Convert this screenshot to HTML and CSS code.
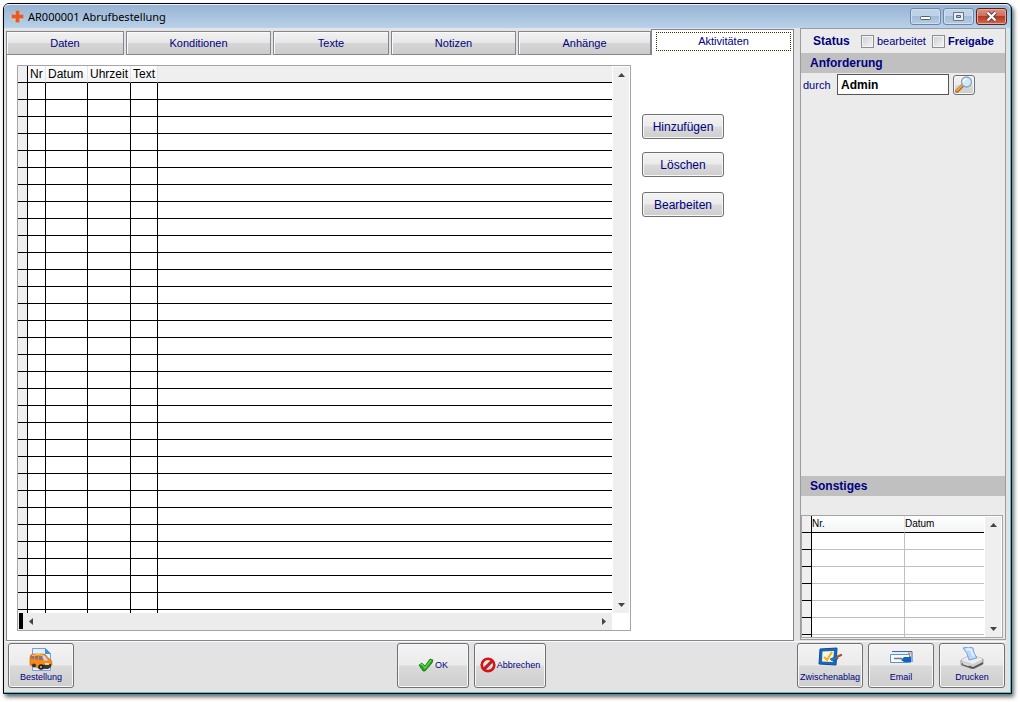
FILE: index.html
```
<!DOCTYPE html>
<html lang="de">
<head>
<meta charset="utf-8">
<title>AR000001 Abrufbestellung</title>
<link rel="stylesheet" href="styles.css">
</head>
<body>
<div class="window">
  <header class="titlebar">
    <svg class="app-icon" width="14" height="14" viewBox="0 0 14 14"><path d="M4 1h5v4h4v5H9v4H4v-4H0V5h4z" fill="#c9c9cc"/><path d="M5.500 .5h4V4.500h4v4h-4v4h-4v-4h-4v-4h4z" fill="#e85a24" stroke="#d9a793" stroke-width=".6"/></svg>
    <h1 class="title">AR000001 Abrufbestellung</h1>
    <div class="window-buttons">
      <button class="win-btn" aria-label="Minimieren"><svg width="13" height="11" viewBox="0 0 13 11"><rect x="1.500" y="5.500" width="10" height="3" rx="1" fill="#fff" stroke="#555f6c"/></svg></button>
      <button class="win-btn" aria-label="Maximieren"><svg width="13" height="11" viewBox="0 0 13 11"><path d="M1.500 1.500h10v8h-10z" fill="#e8eef5" stroke="#6b7683"/><path d="M4.500 4.500h4v2h-4z" fill="#b5c4d4" stroke="#555f6c"/></svg></button>
      <button class="win-btn win-close" aria-label="Schließen"><svg width="13" height="11" viewBox="0 0 13 11"><path d="M2.500 1.500l8 8m0-8l-8 8" stroke="#5b4048" stroke-width="4"/><path d="M2.500 1.500l8 8m0-8l-8 8" stroke="#fff" stroke-width="2.200"/></svg></button>
    </div>
  </header>
  <main class="main">
    <section class="left">
      <div class="tabs" role="tablist">
        <button class="tab" role="tab">Daten</button>
        <button class="tab" role="tab">Konditionen</button>
        <button class="tab" role="tab">Texte</button>
        <button class="tab" role="tab">Notizen</button>
        <button class="tab tab-joined" role="tab">Anhänge</button>
        <button class="tab tab-active" role="tab" aria-selected="true"><span class="focus">Aktivitäten</span></button>
      </div>
      <div class="page">
        <div class="grid">
          <div class="grid-view">
            <table class="list">
              <colgroup><col class="c-mark"><col class="c-nr"><col class="c-datum"><col class="c-zeit"><col class="c-text"><col></colgroup>
              <thead><tr><th></th><th>Nr</th><th>Datum</th><th>Uhrzeit</th><th>Text</th><th></th></tr></thead>
              <tbody data-rows="32" data-cols="6"></tbody>
            </table>
          </div>
          <div class="vbar"><svg width="7" height="4" viewBox="0 0 7 4"><path d="M0 4l3.500-4L7 4z" fill="#444"/></svg><svg width="7" height="4" viewBox="0 0 7 4"><path d="M0 0h7L3.500 4z" fill="#444"/></svg></div>
          <div class="hbar"><span class="split"></span><svg width="4" height="7" viewBox="0 0 4 7"><path d="M4 0v7L0 3.500z" fill="#444"/></svg><span class="track"></span><svg width="4" height="7" viewBox="0 0 4 7"><path d="M0 0v7l4-3.500z" fill="#444"/></svg></div>
        </div>
        <div class="actions">
          <button class="btn">Hinzufügen</button>
          <button class="btn">Löschen</button>
          <button class="btn btn-last">Bearbeiten</button>
        </div>
      </div>
    </section>
    <aside class="side">
      <div class="status">
        <strong class="status-title">Status</strong>
        <label class="check"><input type="checkbox">bearbeitet</label>
        <label class="check check-bold"><input type="checkbox">Freigabe</label>
      </div>
      <h2 class="band">Anforderung</h2>
      <div class="request">
        <label for="durch">durch</label>
        <input class="field" id="durch" type="text" value="Admin">
        <button class="search" aria-label="Suchen"><svg width="18" height="17" viewBox="0 0 18 17"><path d="M2 15l6-6" stroke="#a85b16" stroke-width="3.600" stroke-linecap="round"/><path d="M2 14.500l5.500-5.500" stroke="#f3a43a" stroke-width="2.200" stroke-linecap="round"/><circle cx="11.500" cy="6" r="5" fill="#cdeaf8" stroke="#8ba3bd" stroke-width="1.300"/><path d="M8.500 6a3 3 0 0 1 3-3" stroke="#fff" stroke-width="1.500" fill="none"/></svg></button>
      </div>
      <h2 class="band band-lower">Sonstiges</h2>
      <div class="misc">
        <div class="misc-view">
          <table class="list list-misc">
            <colgroup><col class="c-mark"><col class="c-num"><col></colgroup>
            <thead><tr><th></th><th>Nr.</th><th>Datum</th></tr></thead>
            <tbody data-rows="7" data-cols="3"></tbody>
          </table>
        </div>
        <div class="vbar"><svg width="7" height="4" viewBox="0 0 7 4"><path d="M0 4l3.500-4L7 4z" fill="#444"/></svg><svg width="7" height="4" viewBox="0 0 7 4"><path d="M0 0h7L3.500 4z" fill="#444"/></svg></div>
      </div>
    </aside>
  </main>
  <footer class="footer">
    <div class="foot-group foot-left">
      <button class="tool"><svg width="24" height="24" viewBox="0 0 24 24"><path d="M3.500 1.500h13l5 5v17h-18z" fill="#e4efff" stroke="#7f9be0"/><path d="M16 1l6 6h-6z" fill="#3f92dc"/><path d="M1 10q0-3 4-3h9q3 0 5 4l3 2q1 1 1 5l-3 3-8 1-11-4z" fill="#f58a16" stroke="#b85d0c" stroke-width=".6"/><path d="M2 9h3v3l-3-.5zM6 9h3v3.500H6zM10 9h3l1 4h-4z" fill="#8a7080"/><path d="M13.500 9h2.500l3 4.500h-4z" fill="#c8d7ff"/><path d="M3 8.500q6-2 12 0" stroke="#ffcb6b" fill="none"/><path d="M12 18l10-1v3l-3 2-8-.5z" fill="#383838"/><circle cx="5" cy="18.500" r="2" fill="#333"/><circle cx="12" cy="20" r="2.800" fill="#222"/><circle cx="12" cy="20" r="1.100" fill="#bbb"/><path d="M16 17h4" stroke="#fff6bb" stroke-width="1.500"/></svg>Bestellung</button>
    </div>
    <div class="foot-group foot-center">
      <button class="tool tool-row"><svg width="16" height="14" viewBox="0 0 16 14"><path d="M1 7l3-2 3 3 5-7 3 1-1 3-7 8H5z" fill="#22a51c" stroke="#147810" stroke-width=".8"/><path d="M2.500 7L4 6l3 4 6-8" stroke="#6bdc50" stroke-width="1.200" fill="none"/></svg>OK</button>
      <button class="tool tool-row"><svg width="16" height="16" viewBox="0 0 16 16"><g fill="none"><circle cx="8" cy="8" r="6.300" stroke="#777" stroke-width="2.600"/><circle cx="8" cy="8" r="6.200" stroke="#f00808" stroke-width="2.200"/><path d="M4.500 12.500l8-8" stroke="#555" stroke-width="2"/><path d="M3.700 11.700l8-8" stroke="#f00808" stroke-width="2"/></g></svg>Abbrechen</button>
    </div>
    <div class="foot-group foot-right">
      <button class="tool"><svg width="26" height="20" viewBox="0 0 26 20"><path d="M3 2l17-1-1 17-17-1z" fill="#1769bd" stroke="#134b91"/><path d="M5.500 4.500L17 4l-1 11-11-.5z" fill="#fff5dc"/><path d="M7 10l3 3 5-8" stroke="#efb11b" stroke-width="2" fill="none"/><path d="M13 12l7-3 1 3-6 2z" fill="#187ccc" stroke="#174d83" stroke-width=".6"/><path d="M20 10l4-2" stroke="#a55237" stroke-width="2.500" stroke-linecap="round"/></svg><span>Zwischenablag</span></button>
      <button class="tool"><svg width="26" height="20" viewBox="0 0 26 20"><path d="M4 4.500h20V15" fill="#e9f1fc" stroke="#4364b0"/><path d="M5 5h18v9H5z" fill="#e3edf9"/><path d="M2.500 7.500h19v8h-19z" fill="#f7fbff" stroke="#5d96cd"/><path d="M6 11.500h8" stroke="#777" stroke-width="1.500"/><path d="M20 5.500h2.500v2H20z" fill="#d9844d"/><path d="M13 13l3-3h6l1-1v7l-1-1h-6z" fill="#1263bd"/></svg><span>Email</span></button>
      <button class="tool"><svg width="24" height="22" viewBox="0 0 24 22"><path d="M1 13l6-3 10 0 6 2v5l-10 5-12-4z" fill="#cfcfcf" stroke="#888" stroke-width=".8"/><path d="M1 13l12 4 10-5-5-2H7z" fill="#ededed"/><path d="M3 1q6-2 10 0 0 5 4 10l-8 2q-1-7-6-12z" fill="#b9d6fb" stroke="#789fdd"/><path d="M6 2.500h5q1 4 3 7" stroke="#e6f3ff" stroke-width="2" fill="none"/><path d="M2 16l11 4 10-5v2l-10 5-11-4z" fill="#555"/><path d="M3 16.500l6 2" stroke="#ddd" stroke-width="1.500"/></svg><span>Drucken</span></button>
    </div>
  </footer>
</div>
<script src="rows.js"></script>
</body>
</html>
```
FILE: rows.js
```
// Fill each list with its blank rows.
document.querySelectorAll('tbody[data-rows]').forEach(function (body) {
  for (let r = 0; r < Number(body.dataset.rows); r++) {
    const row = body.insertRow();
    for (let c = 0; c < Number(body.dataset.cols); c++) row.insertCell();
  }
});
```
FILE: styles.css
```
* { box-sizing: border-box; }
body {
  margin: 0;
  padding: 3px 8px 8px 3px;
  height: 100vh;
  background: #fff;
  color: #000080;
  font: 11px/14px "Liberation Sans", Arial, sans-serif;
}
button, input { font: inherit; color: inherit; margin: 0; }
button { padding: 0; }
svg { flex: none; display: block; }

.window {
  height: 100%;
  display: flex;
  flex-direction: column;
  border: 1px solid #000;
  border-radius: 6px 6px 0 0;
  background: #e3e3e3;
  box-shadow: inset -1px -1px #22cfe8, 2px 3px 4px rgba(0, 0, 0, .6);
  padding: 0 5px 3px 2px;
}
.titlebar {
  flex: none;
  height: 24px;
  margin: 0 -4px 0 -2px;
  padding: 0 3px 0 6px;
  display: flex;
  align-items: center;
  gap: 4px;
  border-top: 1px solid #e8f2fb;
  border-radius: 5px 5px 0 0;
  background: linear-gradient(#98b4d2, #b9d1ea);
  color: #000;
}
.title { flex: 1; margin: 0; font: 11px/16px "Noto Sans", "Open Sans", sans-serif; }
.window-buttons { display: flex; gap: 2px; }
.win-btn {
  width: 31px;
  height: 17px;
  display: grid;
  place-items: center;
  border: 1px solid #6f87a3;
  border-radius: 3px;
  box-shadow: inset 0 0 0 1px #cfdff0;
  background: linear-gradient(#bfd3e8 50%, #a3bdd8 50%, #b4cde6);
}
.win-close {
  border-color: #5c2020;
  box-shadow: inset 0 0 0 1px #e5a99c;
  background: linear-gradient(#dc9482, #cf6b56 50%, #b53a22 50%, #cf6a4c);
}

.main { flex: 1; min-height: 0; display: flex; gap: 6px; }
.left { flex: 1; min-width: 0; display: flex; flex-direction: column; }
.tabs {
  flex: none;
  display: grid;
  grid-template-columns: 120fr 147fr 118fr 127fr 133fr 143fr;
  align-items: end;
  height: 27px;
  padding-top: 1px;
}
.tab {
  height: 24px;
  margin-right: 2px;
  border: 1px solid #85858f;
  box-shadow: inset 1px 1px #fafafa;
  background: linear-gradient(#f2f2f2, #e7e7e7 48%, #d5d5d5 52%, #cccccc);
}
.tab-joined { margin-right: 0; }
.tab-active {
  height: 26px;
  margin-right: 0;
  padding: 2px 2px 4px 4px;
  border-bottom: 0;
  background: #fff;
  box-shadow: none;
}
.focus { display: block; height: 19px; border: 1px dotted #333300; line-height: 17px; }
.page {
  flex: 1;
  min-height: 0;
  display: flex;
  padding: 10px 69px 9px 10px;
  gap: 11px;
  border: solid #85858f;
  border-width: 0 1px 1px;
  background: #fff;
}

.grid {
  flex: 1;
  min-width: 0;
  display: grid;
  grid-template: minmax(0, 1fr) 17px / minmax(0, 1fr) 18px;
  border: 1px solid #a5a5a8;
}
.grid-view, .misc-view { overflow: hidden; }
.list { width: 100%; table-layout: fixed; border-collapse: separate; border-spacing: 0; color: #000; }
.list th, .list td { height: 17px; padding: 0; border: solid #000; border-width: 0 1px 1px 0; }
.list th {
  background: linear-gradient(#fff, #f1f3f5);
  border-right-color: #e2e4e8;
  font: 12px/16px "Liberation Sans", Arial, sans-serif;
  text-align: left;
  padding-left: 2px;
  white-space: nowrap;
}
.list th:first-child { border-right-color: #000; background: #efefef; }
.list td:first-child { background: #efefef; }
.grid .list th:last-child { background: #efefef; }
.list th:last-child, .list td:last-child { border-right: 0; }
.c-mark { width: 10px; }
.c-nr { width: 18px; }
.c-datum { width: 42px; }
.c-zeit { width: 43px; }
.c-text { width: 27px; }
.c-num { width: 93px; }
.list-misc td { border-color: #c0c0c0; }
.list-misc td:first-child { border-color: #000; }
.list-misc th { font-size: 10px; padding-left: 0; }

.vbar {
  display: flex;
  flex-direction: column;
  align-items: center;
  justify-content: space-between;
  margin: 1px 1px 0 1px;
  padding: 6px 0;
  background: #efefef;
}
.hbar {
  display: flex;
  align-items: center;
  padding: 0 6px 1px 1px;
  background: #ececec;
}
.split { width: 4px; height: 100%; background: #000; margin-right: 6px; }
.track { flex: 1; }

.actions { flex: none; width: 82px; padding-top: 49px; display: flex; flex-direction: column; gap: 13px; }
.btn, .tool, .search {
  border: 1px solid #707070;
  border-radius: 3px;
  box-shadow: inset 0 0 0 1px #f7f7f7;
  background: linear-gradient(#f3f3f3, #ebebeb 48%, #dadada 52%, #cecece);
}
.btn { height: 25px; font-size: 12px; }
.btn-last { margin-top: 2px; }

.side {
  flex: none;
  width: 206px;
  display: flex;
  flex-direction: column;
  margin-bottom: 1px;
  border: 1px solid #9a9aa0;
  background: #ebebeb;
  padding-bottom: 1px;
}
.status { height: 24px; display: flex; align-items: center; gap: 6px; padding-left: 12px; }
.status-title { width: 42px; font-size: 12px; }
.check { display: flex; align-items: center; gap: 3px; }
.check-bold { font-weight: bold; }
.check input {
  appearance: none;
  width: 13px;
  height: 13px;
  border: 1px solid #8e8f8f;
  box-shadow: inset 0 0 0 1px #f4f4f4;
  background: linear-gradient(135deg, #cbcfd5, #f6f6f6);
}
.band { flex: none; margin: 0; padding-left: 9px; background: #c0c0c0; font-size: 12px; line-height: 20px; }
.request { display: flex; align-items: center; gap: 4px; padding: 1px 2px; }
.request label { width: 30px; }
.field {
  width: 112px;
  height: 21px;
  padding: 0 3px;
  border: 1px solid #555;
  background: #fff;
  color: #000;
  font-size: 12px;
  font-weight: bold;
}
.search { width: 22px; height: 20px; display: grid; place-items: center; }
.band-lower { margin-top: auto; margin-bottom: 19px; }
.misc {
  flex: none;
  height: 123px;
  margin-right: 2px;
  display: grid;
  grid-template: minmax(0, 1fr) / minmax(0, 1fr) 18px;
  border: 1px solid #a5a5a8;
  background: #fff;
}

.footer { flex: none; display: flex; padding: 1px 1px 2px 2px; border-top: 1px solid #fafafa; }
.foot-group { display: flex; gap: 5px; }
.foot-left { flex: 39 1 0; }
.foot-right { flex: 46 1 0; justify-content: flex-end; }
.tool {
  width: 66px;
  height: 45px;
  display: flex;
  flex-direction: column;
  align-items: center;
  justify-content: space-between;
  padding: 3px 0 4px;
  overflow: hidden;
  font-size: 9px;
  line-height: 11px;
}
.tool-row { width: 72px; flex-direction: row; justify-content: center; gap: 1px; }
```
